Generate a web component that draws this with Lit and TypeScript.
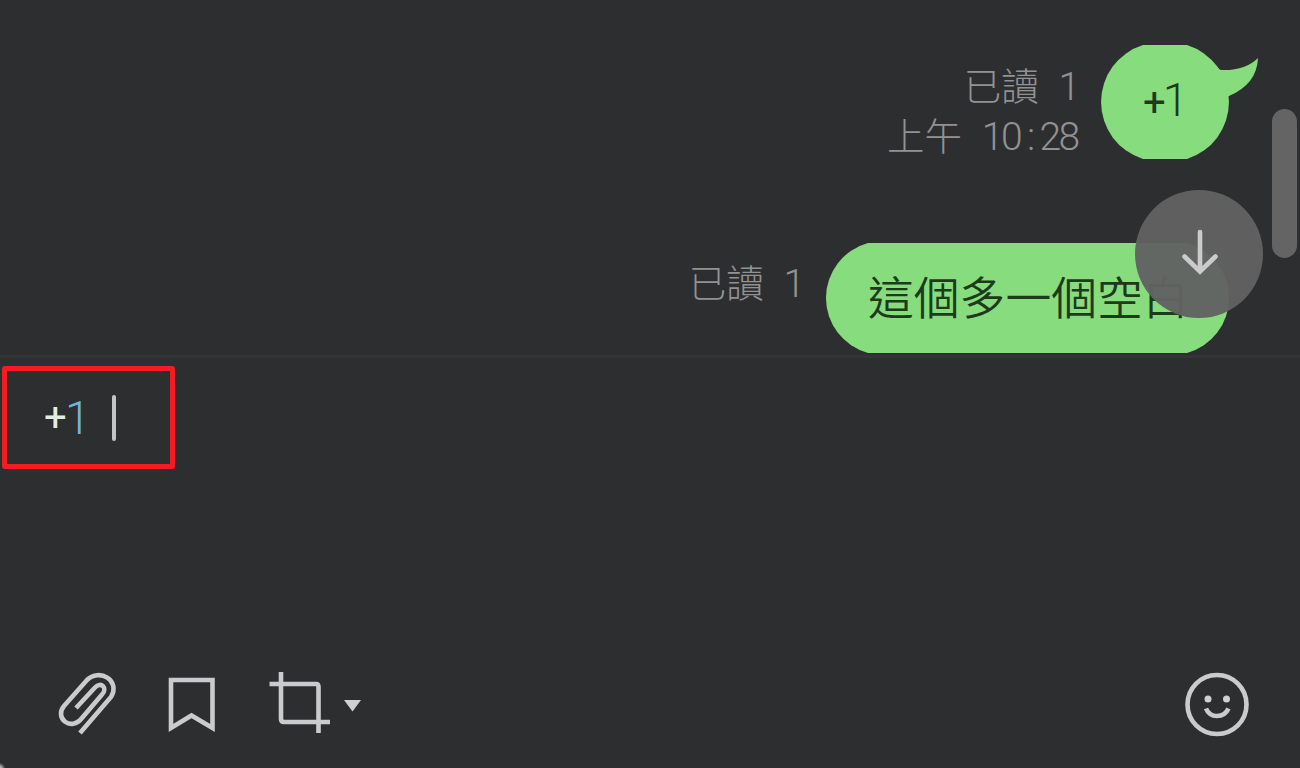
import {LitElement, html, css, svg} from 'lit';
import {customElement, property} from 'lit/decorators.js';

interface Message {
  text: string;
  read: string;
  time?: string;
  kind: 'short' | 'long';
}

@customElement('chat-message')
export class ChatMessage extends LitElement {
  @property({ type: Object }) message!: Message;

  static styles = css`
    :host {
      display: flex;
      justify-content: flex-end;
      gap: 22px;
    }

    .meta {
      display: flex;
      flex-direction: column;
      align-items: flex-end;
      padding-top: 14px;
      font-size: 37.5px;
      font-weight: 300;
      line-height: 50px;
      color: #929292;
      white-space: nowrap;
    }

    .meta.long {
      padding-top: 13px;
    }

    .meta__row {
      display: flex;
      height: 50px;
      gap: 21px;
    }

    .meta__number {
      display: flex;
      padding-top: 3px;
      font-family: Roboto, sans-serif;
      font-size: 39px;
    }

    .meta__digit {
      width: 19.2px;
      display: flex;
      justify-content: center;
    }

    .bubble {
      position: relative;
      display: flex;
      box-sizing: border-box;
      width: 128px;
      height: 114px;
      padding-left: 42px;
      line-height: 111px;
      font-family: Roboto, sans-serif;
      font-size: 46px;
      font-weight: 300;
      color: #1d3a1b;
      white-space: nowrap;
    }

    .bubble.long {
      width: 403px;
      height: 110px;
      line-height: 105px;
      font-family: 'Noto Sans CJK TC', sans-serif;
      font-size: 45.8px;
      font-weight: 350;
    }

    .bubble__shape {
      position: absolute;
      left: 0;
      top: 0;
      overflow: visible;
      fill: #87dc7d;
    }

    .bubble__text {
      position: relative;
    }

    .short .bubble__text {
      letter-spacing: -3px;
    }

    .short .bubble__text::first-letter {
      font-size: 40px;
      font-weight: 400;
    }
  `;

  shape() {
    return this.message.kind === 'short'
      ? svg`
          <path d="M42 0H86A59.7 59.7 0 0 1 86 114H42A59.7 59.7 0 0 1 42 0Z" />
          <path d="M112 17Q117 24 120 25Q144 26 157 13Q156 39 128 51L112 60Z" />
        `
      : svg`<path d="M42 0H361A57 57 0 0 1 361 110H42A57 57 0 0 1 42 0Z" />`;
  }

  digits(value: string) {
    return html`
      <span class="meta__number">
        ${[...value].map((digit) => html`<span class="meta__digit">${digit}</span>`)}
      </span>
    `;
  }

  render() {
    const { text, read, time, kind } = this.message;
    return html`
      <div class="meta ${kind}">
        <div class="meta__row"><span>已讀</span>${this.digits(read)}</div>
        ${time ? html`<div class="meta__row"><span>上午</span>${this.digits(time)}</div>` : ''}
      </div>
      <div class="bubble ${kind}">
        <svg class="bubble__shape" width="100%" height="100%">${this.shape()}</svg>
        <span class="bubble__text">${text}</span>
      </div>
    `;
  }
}

@customElement('app-root')
export class AppRoot extends LitElement {
  @property({ type: Array }) messages: Message[] = [
    { text: '+1', read: '1', time: '10:28', kind: 'short' },
    { text: '這個多一個空白', read: '1', kind: 'long' },
  ];

  static styles = css`
    :host {
      position: relative;
      display: flex;
      flex-direction: column;
      height: 768px;
      overflow: hidden;
      background: #2d2e30;
      font-family: 'Noto Sans CJK TC', 'Noto Sans', sans-serif;
    }

    .chat {
      position: relative;
      box-sizing: border-box;
      height: 355px;
      flex: none;
      display: flex;
      flex-direction: column;
      gap: 84px;
      padding: 45px 71px 0 0;
    }

    .chat__scrollbar {
      position: absolute;
      right: 3px;
      top: 109px;
      width: 25px;
      height: 149px;
      border-radius: 13px;
      background: #646464;
    }

    .chat__down {
      position: absolute;
      right: 37px;
      top: 190px;
      width: 128px;
      height: 128px;
      border-radius: 50%;
      background: rgba(98, 98, 98, 0.96);
    }

    .composer {
      flex: 1;
      display: flex;
      flex-direction: column;
      justify-content: space-between;
      border-top: 3px solid #343537;
    }

    .composer__input {
      box-sizing: border-box;
      display: flex;
      align-items: center;
      width: 173px;
      height: 103px;
      margin: 8px 0 0 2px;
      padding-left: 37px;
      border: 5px solid #f51b23;
      border-radius: 3px;
      font-family: Roboto, sans-serif;
      font-size: 46px;
      line-height: 90px;
      color: #e3eee2;
    }

    .composer__plus {
      width: 21px;
      font-size: 40px;
    }

    .composer__digit {
      width: 22px;
      font-weight: 300;
      color: #72b5d9;
    }

    .composer__caret {
      width: 4px;
      height: 46px;
      margin-left: 25px;
      border-radius: 2px;
      background: #c4c4c6;
    }

    .toolbar {
      display: flex;
      align-items: center;
      height: 68px;
      margin-bottom: 30px;
      padding: 0 49px 0 54px;
    }

    .toolbar svg {
      flex: none;
    }

    .toolbar__bookmark {
      margin-left: 44px;
    }

    .toolbar__crop {
      margin-left: 44px;
    }

    .toolbar__caret {
      margin-left: 8px;
    }

    .toolbar__emoji {
      margin-left: auto;
    }

    .line {
      fill: none;
      stroke: #cbcbcd;
      stroke-width: 4.6;
    }

    .solid {
      fill: #d0d0d2;
    }

    .corner {
      position: absolute;
      left: -4px;
      bottom: -4px;
      width: 9px;
      height: 9px;
      background: radial-gradient(circle at 40% 60%, #bbb 20%, transparent 75%);
    }
  `;

  render() {
    return html`
      <div class="chat">
        ${this.messages.map((message) => html`<chat-message .message=${message}></chat-message>`)}
        <div class="chat__scrollbar"></div>
        <svg class="chat__down" viewBox="0 0 128 128">
          <path class="line" d="M65 42V81M49.500 66.500L65 81.500L80.500 66.500" stroke-linecap="round" />
        </svg>
      </div>
      <div class="composer">
        <div class="composer__input">
          <span class="composer__plus">+</span><span class="composer__digit">1</span>
          <span class="composer__caret"></span>
        </div>
        <div class="toolbar">
          <svg width="68" height="68" viewBox="54 670 68 68">
            <path
              class="line"
              d="M76 708L95 687.5C101 681 108 688 102 694.5L82 718C71 732 54 718 64 706L87 680C99 668 121 680 111 697L80 733"
            />
          </svg>
          <svg class="toolbar__bookmark" width="52" height="68" viewBox="166 670 52 68">
            <path class="line" d="M171 680H212.500V728L191.500 715.500L171 728Z" />
          </svg>
          <svg class="toolbar__crop" width="72" height="68" viewBox="262 670 72 68">
            <path class="line" d="M269.500 684H316Q318.500 684 318.500 687V733M281 672V719Q281 722 284 722H330" />
          </svg>
          <svg class="toolbar__caret" width="22" height="68" viewBox="342 670 22 68">
            <path class="solid" d="M344 700H361L352.500 711.500Z" />
          </svg>
          <svg class="toolbar__emoji" width="68" height="68" viewBox="1183 670 68 68">
            <circle class="line" cx="1217" cy="704.500" r="29.500" />
            <circle class="solid" cx="1208" cy="699" r="3.500" />
            <circle class="solid" cx="1226.500" cy="699" r="3.500" />
            <path class="line" d="M1206 708.500Q1209 716 1217 716T1228.500 708.500" />
          </svg>
        </div>
      </div>
      <div class="corner"></div>
    `;
  }
}
